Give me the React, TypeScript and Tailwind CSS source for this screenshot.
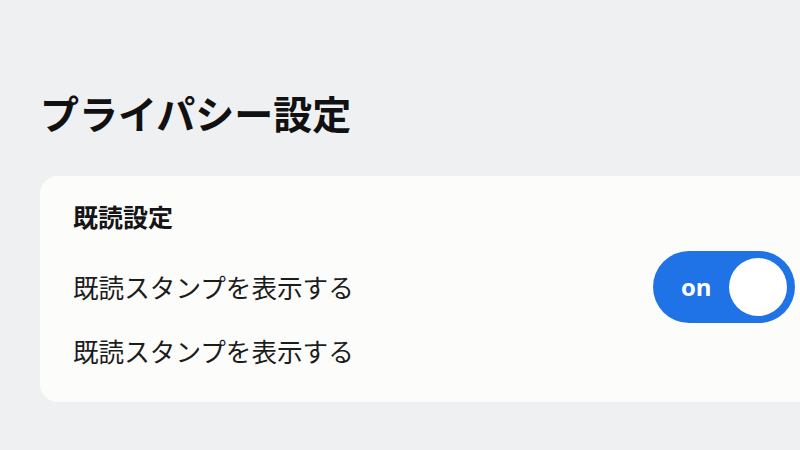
import React from "react";

const jp = {
  fontFamily: '"Noto Sans CJK JP", "Noto Sans", sans-serif',
};

function Toggle({ on }: { on: boolean }) {
  return (
    <div
      className="flex h-[72px] w-[142px] shrink-0 items-center justify-between rounded-full bg-[#1f73e6] pl-[28px] pr-[8px]"
      role="switch"
      aria-checked={on}
    >
      <span
        className="text-[24px] font-bold leading-none text-white"
        style={{ fontFamily: '"Open Sans", "Noto Sans", sans-serif' }}
      >
        on
      </span>
      <span className="h-[58px] w-[58px] rounded-full bg-white" />
    </div>
  );
}

export default function App() {
  return (
    <div
      className="h-[450px] w-[800px] overflow-hidden bg-[#eef0f2] pl-[40px] pt-[84px]"
      style={jp}
    >
      <h1 className="text-[39px] font-bold leading-[56px] text-[#111111]">
        プライパシー設定
      </h1>
      <div className="mt-[36px] flex w-[782px] flex-col rounded-[18px] bg-[#fcfcfa] pl-[33px] pr-[27px] pt-[22px] pb-[15px]">
        <h2 className="text-[25px] font-semibold leading-[36px] text-[#151515]">
          既読設定
        </h2>
        <div className="mt-[17px] flex h-[72px] items-center justify-between">
          <span className="text-[25.6px] leading-none text-[#1c1c1c]">
            既読スタンプを表示する
          </span>
          <Toggle on />
        </div>
        <div className="mt-[-8px] flex h-[72px] items-center">
          <span className="text-[25.6px] leading-none text-[#1c1c1c]">
            既読スタンプを表示する
          </span>
        </div>
      </div>
    </div>
  );
}
